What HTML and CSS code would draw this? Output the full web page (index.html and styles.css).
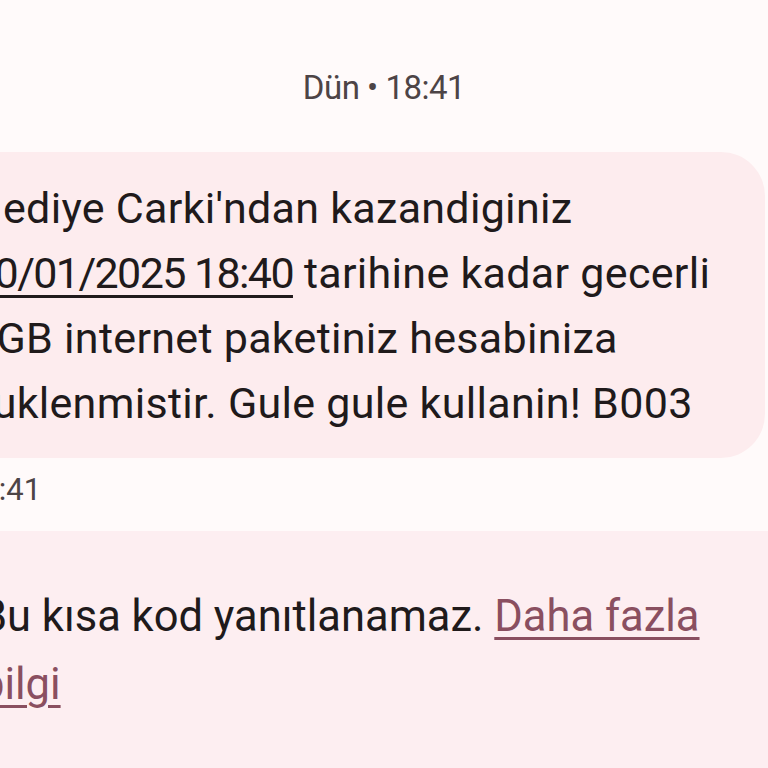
FILE: index.html
```html
<!DOCTYPE html>
<html lang="tr">
<head>
<meta charset="utf-8">
<link rel="stylesheet" href="styles.css">
</head>
<body>
<div class="screen">
  <div class="date">Dün • 18:41</div>
  <div class="bubble">
    <p class="msg">Hediye Carki'ndan kazandiginiz<br><span class="u"><span class="num">30/01/2025 18:40</span></span> tarihine kadar gecerli<br>1GB internet paketiniz hesabiniza<br>yuklenmistir. Gule gule kullanin! B003</p>
  </div>
  <div class="time">18:41</div>
  <div class="footer">
    <p class="note">Bu kısa kod yanıtlanamaz. <a class="link" href="#">Daha fazla<br>bilgi</a></p>
  </div>
</div>
</body>
</html>
```
FILE: styles.css
```css
html, body {
  margin: 0;
  padding: 0;
  background: #fffafa;
}
.screen {
  width: 768px;
  height: 768px;
  overflow: hidden;
  display: flex;
  flex-direction: column;
}
.date {
  font-family: Roboto, "Liberation Sans", sans-serif;
  font-size: 33px;
  color: #4d4446;
  text-align: center;
  padding-top: 68px;
  line-height: 40px;
  height: 84px;
  letter-spacing: -0.5px;
}
.bubble {
  margin-left: -80px;
  margin-right: 3px;
  background: #fdecee;
  border-radius: 44px;
  padding: 24px 20px 22px 52px;
}
.msg {
  margin: 0;
  font-family: Roboto, "Liberation Sans", sans-serif;
  font-size: 43px;
  line-height: 65px;
  color: #201a1b;
  white-space: nowrap;
  letter-spacing: 0.3px;
}
.num {
  letter-spacing: -1.6px;
}
.u {
  text-decoration: underline;
  text-decoration-thickness: 3px;
  text-underline-offset: 7px;
}
.time {
  font-family: Roboto, "Liberation Sans", sans-serif;
  font-size: 31px;
  color: #4d4446;
  margin-left: -36px;
  padding-top: 13px;
  line-height: 38px;
  height: 60px;
}
.footer {
  flex: 1;
  background: #fdeef1;
  margin-left: -40px;
  padding: 52px 20px 0 20px;
}
.note {
  margin: 0;
  font-family: Roboto, "Liberation Sans", sans-serif;
  font-size: 43.5px;
  line-height: 68px;
  color: #201a1b;
  white-space: nowrap;
}
.link {
  color: #8a4f60;
  text-decoration: underline;
  text-decoration-thickness: 3px;
  text-underline-offset: 6px;
}
```
